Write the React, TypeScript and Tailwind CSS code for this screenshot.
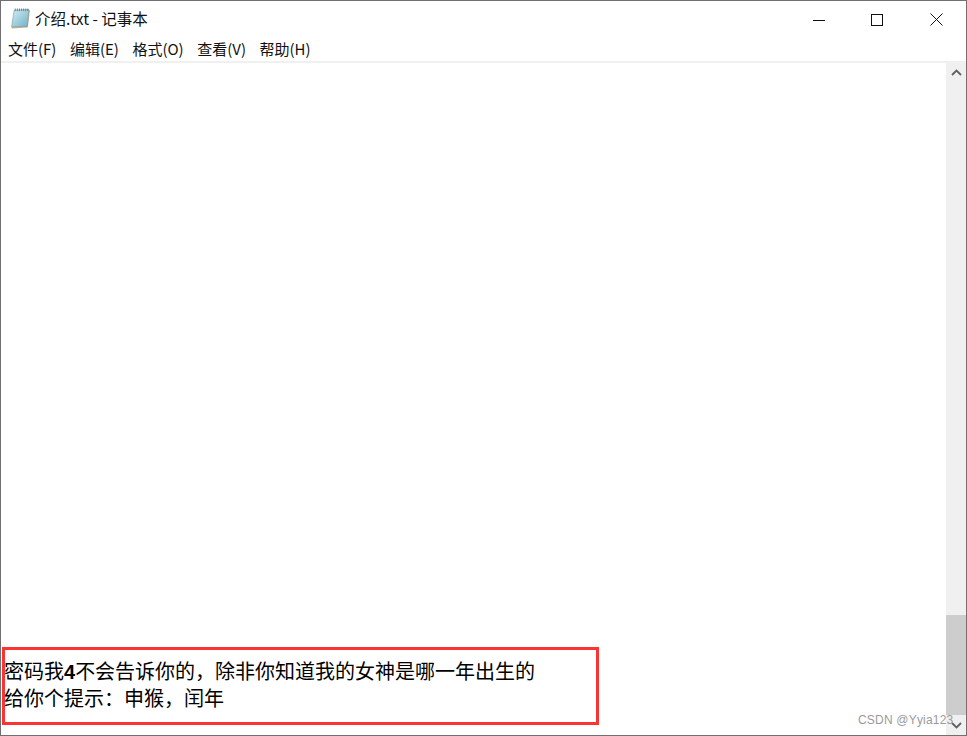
const cjk = "font-['Microsoft_YaHei','Noto_Sans_CJK_SC',sans-serif]";

const menus = ["文件(F)", "编辑(E)", "格式(O)", "查看(V)", "帮助(H)"];

function NotepadIcon() {
  return (
    <svg width="21" height="21" viewBox="0 0 20 20">
      <defs>
        <linearGradient id="page" x1="0" y1="0" x2="1" y2="1">
          <stop offset="0" stopColor="#d4eef5" />
          <stop offset="1" stopColor="#6fb0c6" />
        </linearGradient>
      </defs>
      <path d="M5 2.5 L19 2 L17 18.5 L1.5 19.5 Z" fill="#c9b48a" />
      <path d="M4 2 L18 1.5 L16.5 17.5 L1.5 18 Z" fill="url(#page)" stroke="#7d9aa6" strokeWidth="0.6" />
      <path d="M5 0.5 V3 M7 0.5 V3 M9 0.5 V3 M11 0.5 V3 M13 0.5 V3 M15 0.5 V3 M17 0.5 V3" stroke="#6b7b84" strokeWidth="0.9" />
    </svg>
  );
}

function WindowButtons() {
  return (
    <div className="flex items-center text-black">
      <div className="flex h-[37px] w-[57px] items-center justify-center">
        <svg width="12" height="12" viewBox="0 0 12 12">
          <path d="M0 6.5 H12" stroke="#111" strokeWidth="1" />
        </svg>
      </div>
      <div className="flex h-[37px] w-[59px] items-center justify-center">
        <svg width="12" height="12" viewBox="0 0 12 12">
          <rect x="0.5" y="0.5" width="11" height="11" fill="none" stroke="#111" strokeWidth="1" />
        </svg>
      </div>
      <div className="flex h-[37px] w-[60px] items-center justify-center">
        <svg width="13" height="13" viewBox="0 0 13 13">
          <path d="M0.5 0.5 L12.5 12.5 M12.5 0.5 L0.5 12.5" stroke="#111" strokeWidth="1" />
        </svg>
      </div>
    </div>
  );
}

export default function App() {
  return (
    <div className={`relative flex h-[736px] w-[967px] flex-col overflow-hidden border border-[#707070] bg-white text-black ${cjk}`}>
      <div className="flex h-[37px] shrink-0 items-start justify-between">
        <div className="flex h-[37px] items-center pb-[2px] pl-[9px]">
          <NotepadIcon />
          <span className="ml-[4px] text-[15.5px] text-[#111]">介绍.txt - 记事本</span>
        </div>
        <WindowButtons />
      </div>

      <div className="flex h-[23px] shrink-0 items-center gap-[13.5px] pl-[7px] text-[15px] text-[#111]">
        {menus.map((m) => (
          <span key={m}>{m}</span>
        ))}
      </div>

      <div className="h-[2px] shrink-0 bg-[#f0f0f0]" />

      <div className="flex min-h-0 flex-1">
        <div className="flex flex-1 flex-col justify-end pb-[24px] pl-[3px] text-[20px] leading-[27px]">
          <p>
            密码我<span className="font-['Liberation_Sans',sans-serif] font-bold leading-none">4</span>不会告诉你的，除非你知道我的女神是哪一年出生的
          </p>
          <p>给你个提示：申猴，闰年</p>
        </div>
        <div className="flex w-[20px] flex-col bg-[#f0f0f0]">
          <div className="flex h-[19px] items-center justify-center">
            <svg width="11" height="7" viewBox="0 0 11 7">
              <path d="M1 6 L5.5 1.5 L10 6" fill="none" stroke="#606060" strokeWidth="1.8" />
            </svg>
          </div>
          <div className="mt-[533px] h-[100px] bg-[#cdcdcd]" />
          <div className="mt-auto flex h-[19px] items-center justify-center">
            <svg width="11" height="7" viewBox="0 0 11 7">
              <path d="M1 1 L5.5 5.5 L10 1" fill="none" stroke="#606060" strokeWidth="1.8" />
            </svg>
          </div>
        </div>
      </div>

      {/* annotation and watermark sit on top of the window */}
      <div className="absolute left-[1px] top-[646px] h-[78px] w-[597px] border-[3px] border-[#f83434]" />
      <span className="absolute left-[857px] top-[710px] font-['Liberation_Sans',sans-serif] text-[12px] tracking-[0.2px] text-[#9a9a9a]">
        CSDN @Yyia123
      </span>
    </div>
  );
}
